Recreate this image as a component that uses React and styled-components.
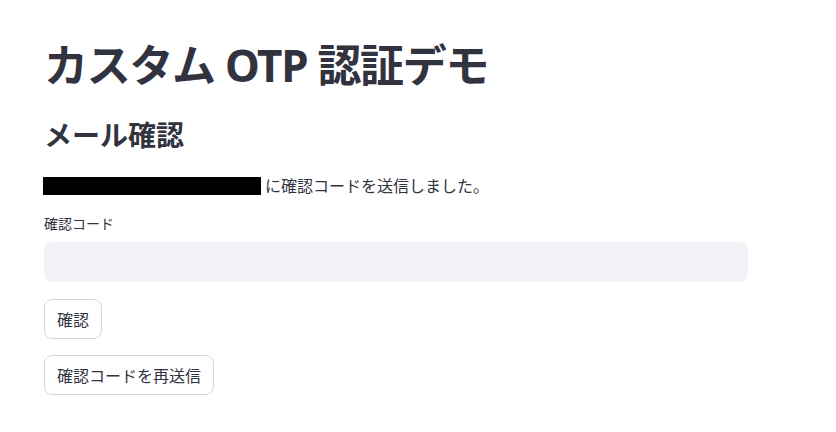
import React from "react";
import styled, { createGlobalStyle } from "styled-components";

const GlobalStyle = createGlobalStyle`
  body {
    margin: 0;
    background: #fff;
    font-family: "Noto Sans", "Noto Sans CJK JP", sans-serif;
    color: #31333f;
  }
`;

const Page = styled.main`
  width: 704px;
  padding: 39px 44px 0;
  display: flex;
  flex-direction: column;
`;

const Title = styled.h1`
  margin: 0;
  font-size: 44px;
  font-weight: 700;
  line-height: 1.2;
  letter-spacing: -1.3px;
`;

const Subtitle = styled.h2`
  margin: 27px 0 0;
  font-size: 28px;
  font-weight: 700;
  line-height: 1.2;
`;

const Message = styled.p`
  margin: 24px 0 0;
  display: flex;
  align-items: center;
  font-size: 16px;
  line-height: 20px;
`;

const Redacted = styled.span`
  display: inline-block;
  width: 218px;
  height: 18px;
  background: #000;
  margin-right: 4px;
  margin-left: -1px;
`;

const Label = styled.label`
  margin-top: 18px;
  font-size: 14px;
  line-height: 20px;
`;

const Input = styled.input`
  margin-top: 8px;
  height: 40px;
  border: none;
  border-radius: 8px;
  background: #f0f2f6;
  padding: 0 12px;
  font: inherit;
  outline: none;
`;

const Button = styled.button`
  align-self: flex-start;
  margin-top: ${(p) => p.$gap}px;
  height: 40px;
  padding: 0 12px;
  border: 1px solid #d6d6d9;
  border-radius: 8px;
  background: #fff;
  color: #31333f;
  font-family: "Noto Sans", "Noto Sans CJK JP", sans-serif;
  font-size: 16px;
`;

export default function App() {
  return (
    <>
      <GlobalStyle />
      <Page>
        <Title>カスタム OTP 認証デモ</Title>
        <Subtitle>メール確認</Subtitle>
        <Message>
          <Redacted />
          に確認コードを送信しました。
        </Message>
        <Label>確認コード</Label>
        <Input type="text" />
        <Button $gap={17}>確認</Button>
        <Button $gap={16}>確認コードを再送信</Button>
      </Page>
    </>
  );
}
